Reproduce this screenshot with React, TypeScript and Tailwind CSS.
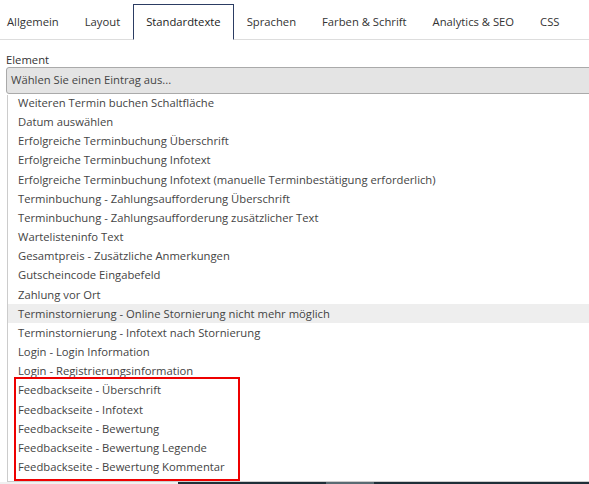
import React from "react";

const tabs = ["Allgemein", "Layout", "Standardtexte", "Sprachen", "Farben & Schrift", "Analytics & SEO", "CSS"];

const entries = [
	"Weiteren Termin buchen Schaltfläche",
	"Datum auswählen",
	"Erfolgreiche Terminbuchung Überschrift",
	"Erfolgreiche Terminbuchung Infotext",
	"Erfolgreiche Terminbuchung Infotext (manuelle Terminbestätigung erforderlich)",
	"Terminbuchung - Zahlungsaufforderung Überschrift",
	"Terminbuchung - Zahlungsaufforderung zusätzlicher Text",
	"Wartelisteninfo Text",
	"Gesamtpreis - Zusätzliche Anmerkungen",
	"Gutscheincode Eingabefeld",
	"Zahlung vor Ort",
	"Terminstornierung - Online Stornierung nicht mehr möglich",
	"Terminstornierung - Infotext nach Stornierung",
	"Login - Login Information",
	"Login - Registrierungsinformation",
	"Feedbackseite - Überschrift",
	"Feedbackseite - Infotext",
	"Feedbackseite - Bewertung",
	"Feedbackseite - Bewertung Legende",
	"Feedbackseite - Bewertung Kommentar",
];

function Tabs() {
	return (
		<div className="flex h-[40px] whitespace-nowrap border-b border-[#dddddd]">
			{tabs.map((t, i) => {
				const active = t === "Standardtexte";
				return (
					<div
						key={t}
						className={
							active
								? "mt-[4px] -mb-px flex h-[36px] shrink-0 items-center border border-b-white border-[#2c3d63] bg-white px-[12px] text-[#222]"
								: i === 0
									? "mt-[4px] flex h-[36px] shrink-0 items-center border border-transparent pl-[6px] pr-[12px]"
									: "mt-[4px] flex h-[36px] shrink-0 items-center border border-transparent px-[12px]"
						}
					>
						{t}
					</div>
				);
			})}
		</div>
	);
}

export default function App() {
	const selected = 11;
	return (
		<div
			className="relative h-[484px] w-[589px] overflow-hidden bg-white text-[11.25px] text-[#333]"
			style={{ fontFamily: '"Open Sans", "Liberation Sans", sans-serif' }}
		>
			<Tabs />
			<div className="pl-[6px] pt-[12px] leading-[15px]">Element</div>
			<div className="ml-[6px] flex h-[27px] w-[600px] items-center rounded-[3px] border border-[#aaaaaa] bg-[#e4e4e4] pl-[4px] text-[#444]">
				Wählen Sie einen Eintrag aus...
			</div>
			{/* open option list of the select */}
			<div className="ml-[7px] mt-[1px] h-[387px] w-[600px] overflow-hidden border-b border-l border-[#cccccc] bg-white">
				<div className="-mt-[2px]">
					{entries.map((e, i) => (
						<div
							key={e}
							className={
								"h-[19.16px] whitespace-nowrap pl-[10px] leading-[19.16px] text-[#444] " +
								(i === selected ? "bg-[#eeeeee] text-[#333]" : "")
							}
						>
							{e}
						</div>
					))}
				</div>
			</div>
			<div className="flex h-[3px]">
				<div className="w-[178px] bg-[#f0f0f0]" />
				<div className="w-[148px] bg-[#1f2f38]" />
				<div className="w-[48px] bg-[#5a6b73]" />
				<div className="flex-1 bg-[#1f2f38]" />
			</div>
			{/* highlight around the feedback entries */}
			<div className="pointer-events-none absolute left-[14px] top-[377px] h-[104px] w-[226px] border-2 border-[#ee0000]" />
		</div>
	);
}
